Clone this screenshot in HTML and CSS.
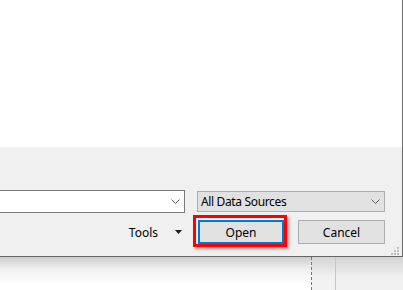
FILE: index.html
```html
<!DOCTYPE html>
<html lang="en">
<head>
<meta charset="UTF-8">
<meta name="viewport" content="width=device-width, initial-scale=1.0">
<title>Open</title>
<link rel="stylesheet" href="styles.css">
</head>
<body>
<div class="dialog">
  <div class="browser"></div>
  <div class="footer">
    <div class="row">
      <div class="filename">
        <svg class="chev" width="9" height="5" viewBox="0 0 9 5"><polyline points="0.5,0.5 4.5,4.5 8.5,0.5" fill="none" stroke="#606060" stroke-width="1"/></svg>
      </div>
      <div class="filter">
        <span>All Data Sources</span>
        <svg class="chev" width="9" height="5" viewBox="0 0 9 5"><polyline points="0.5,0.5 4.5,4.5 8.5,0.5" fill="none" stroke="#606060" stroke-width="1"/></svg>
      </div>
    </div>
    <div class="row buttons">
      <span class="tools">Tools</span>
      <svg class="tools-arrow" width="7" height="4" viewBox="0 0 7 4"><polygon points="0,0 7,0 3.5,4" fill="#1a1a1a"/></svg>
      <div class="marked">
        <button class="btn default">Open</button>
      </div>
      <button class="btn">Cancel</button>
    </div>
    <svg class="grip" width="9" height="9" viewBox="0 0 9 9" fill="#bdbdbd">
      <rect x="7" y="1" width="2" height="2"/>
      <rect x="4" y="4" width="2" height="2"/><rect x="7" y="4" width="2" height="2"/>
      <rect x="1" y="7" width="2" height="2"/><rect x="4" y="7" width="2" height="2"/><rect x="7" y="7" width="2" height="2"/>
    </svg>
  </div>
</div>
<div class="desk">
  <div class="desk-left"></div>
  <div class="desk-mid"></div>
  <div class="desk-right"></div>
</div>
</body>
</html>
```
FILE: styles.css
```css
html, body {
  margin: 0;
  width: 403px;
  height: 290px;
  overflow: hidden;
  background: #fff;
  font-family: "Noto Sans", "Segoe UI", sans-serif;
  font-size: 12px;
  color: #000;
}
.dialog {
  box-sizing: border-box;
  width: 403px;
  height: 257px;
  display: flex;
  flex-direction: column;
  border-right: 1px solid #6b6b6b;
  border-bottom: 1px solid #646464;
}
.browser {
  height: 147px;
  background: #fff;
}
.footer {
  position: relative;
  flex: 1;
  background: #f0f0f0;
  padding-top: 43px;
}
.row {
  display: flex;
  align-items: center;
  height: 23px;
}
.filename {
  box-sizing: border-box;
  margin-left: -30px;
  width: 215px;
  height: 23px;
  background: #fff;
  border: 1px solid #7a7a7a;
  display: flex;
  align-items: center;
  justify-content: flex-end;
  padding-right: 4px;
}
.filter {
  box-sizing: border-box;
  margin-left: 12px;
  width: 188px;
  height: 21px;
  background: #e1e1e1;
  border: 1px solid #adadad;
  display: flex;
  align-items: center;
  justify-content: space-between;
  padding: 0 4px 0 3px;
  letter-spacing: -0.35px;
}
.buttons {
  margin-top: 7px;
  height: 24px;
  justify-content: flex-end;
  padding-right: 17px;
}
.tools {
  margin-right: 17px;
}
.tools-arrow {
  margin-right: 16px;
}
.marked {
  position: relative;
  margin-right: 14px;
}
.marked::after {
  content: "";
  position: absolute;
  left: -5px;
  top: -5px;
  width: 88px;
  height: 26px;
  border: 3px solid #f00;
  box-shadow: 2px 2px 3px rgba(0, 0, 0, 0.35);
  pointer-events: none;
}
.btn {
  box-sizing: border-box;
  width: 87px;
  height: 24px;
  margin: 0;
  padding: 0;
  font: inherit;
  color: #000;
  background: #e1e1e1;
  border: 1px solid #adadad;
  display: block;
}
.btn.default {
  width: 86px;
  border: 2px solid #0078d7;
}
.grip {
  position: absolute;
  right: 3px;
  bottom: 1px;
}
.desk {
  display: flex;
  height: 33px;
}
.desk-left {
  width: 311px;
  background: linear-gradient(rgba(0, 0, 0, 0.2), rgba(0, 0, 0, 0.06) 12px, rgba(0, 0, 0, 0) 28px), #fff;
}
.desk-mid {
  width: 23px;
  background: linear-gradient(rgba(0, 0, 0, 0.12), rgba(0, 0, 0, 0) 20px), #f2f2f2;
  border-left: 1px dashed #7a7a7a;
}
.desk-right {
  flex: 1;
  background: linear-gradient(rgba(0, 0, 0, 0.12), rgba(0, 0, 0, 0) 20px), #f0f0f0;
  border-left: 1px solid #c6c6c6;
}
```
